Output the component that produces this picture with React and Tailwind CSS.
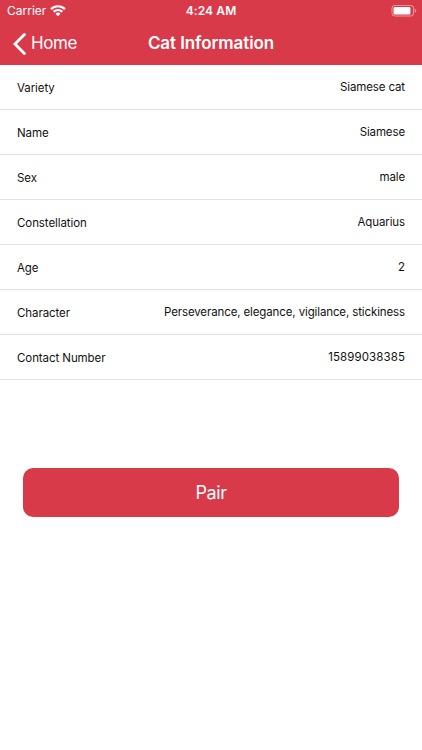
import React from "react";

const details = [
  { label: "Variety", value: "Siamese cat" },
  { label: "Name", value: "Siamese" },
  { label: "Sex", value: "male" },
  { label: "Constellation", value: "Aquarius" },
  { label: "Age", value: "2" },
  { label: "Character", value: "Perseverance, elegance, vigilance, stickiness" },
  { label: "Contact Number", value: "15899038385", numeric: true }
];

function WifiIcon() {
  return (
    <svg width="16" height="12" viewBox="0 0 16 12" fill="none" stroke="#fff">
      <path d="M1 4.1a10 10 0 0 1 14 0" strokeWidth="2.2" />
      <path d="M3.6 6.8a6.3 6.3 0 0 1 8.8 0" strokeWidth="2" />
      <path d="M8 11.3 5.5 8.8a3.5 3.5 0 0 1 5 0Z" fill="#fff" stroke="none" />
    </svg>
  );
}

function BatteryIcon() {
  return (
    <svg width="26" height="12" viewBox="0 0 26 12" fill="none">
      <rect x="1" y="0.4" width="21.6" height="10.6" rx="2.8" stroke="#fff" strokeOpacity="0.5" />
      <rect x="2.6" y="2" width="16.8" height="7.4" rx="1.2" fill="#fff" />
      <path d="M23.8 3.8v4c1.1-.5 1.4-1.2 1.4-2s-.3-1.500-1.400-2Z" fill="#fff" fillOpacity="0.5" />
    </svg>
  );
}

function StatusBar() {
  return (
    <div className="grid grid-cols-3 items-center h-[22px] pl-[7px] pr-[5px] text-[12px] leading-[22px]">
      <div className="flex items-center gap-[4px]">
        <span>Carrier</span>
        <WifiIcon />
      </div>
      <span className="pr-[2px] text-center font-semibold tracking-[0.1px]">4:24 AM</span>
      <div className="flex justify-end">
        <BatteryIcon />
      </div>
    </div>
  );
}

function NavBar() {
  return (
    <div className="grid grid-cols-[1fr_auto_1fr] items-center h-[43px] px-[13px]">
      <button className="flex items-center gap-[5px] text-[17px] tracking-[-0.4px]">
        <svg width="13" height="22" viewBox="0 0 13 22" fill="none" stroke="#fff" strokeWidth="2.8">
          <path d="M11.4 1.6 2 11l9.4 9.4" strokeLinecap="round" />
        </svg>
        <span>Home</span>
      </button>
      <h1 className="text-[17px] font-semibold tracking-[-0.08px]">Cat Information</h1>
    </div>
  );
}

function DetailRow({ label, value, numeric }) {
  return (
    <div className="flex items-center justify-between h-[45px] pt-[3px] px-[17px] border-b border-[#e2e2e3] text-[11.5px]">
      <span className="tracking-[-0.08px]">{label}</span>
      <span className={numeric ? "pb-[2px] tracking-[0.1px]" : "pb-[2px] tracking-[-0.12px]"}>
        {value}
      </span>
    </div>
  );
}

function App() {
  return (
    <div className="h-[750px] w-full bg-white text-[#111] font-['Inter',sans-serif] whitespace-nowrap overflow-hidden">
      <header className="bg-[#d93a4a] text-white">
        <StatusBar />
        <NavBar />
      </header>

      <main>
        {details.map((item) => (
          <DetailRow key={item.label} {...item} />
        ))}

        <div className="pt-[88px] px-[23px]">
          <button className="w-full h-[49px] rounded-[10px] bg-[#d93a4a] text-white text-[18px] tracking-[-0.4px]">
            Pair
          </button>
        </div>
      </main>
    </div>
  );
}

export default App;
